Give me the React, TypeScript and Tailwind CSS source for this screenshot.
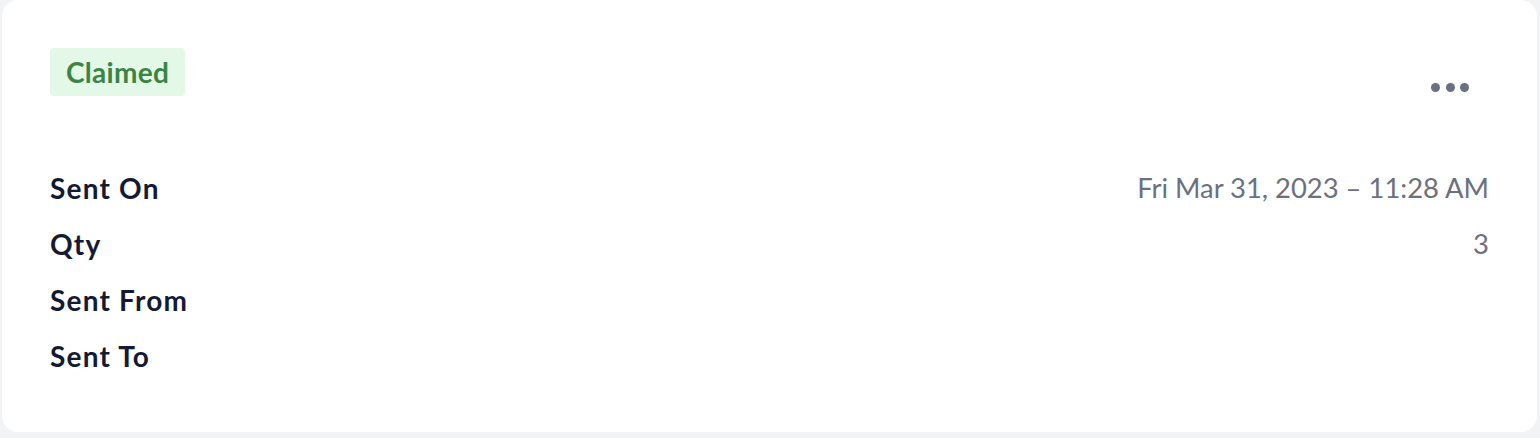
const rows = [
  { label: "Sent On", value: "Fri Mar 31, 2023 – 11:28 AM" },
  { label: "Qty", value: "3" },
  { label: "Sent From", value: "" },
  { label: "Sent To", value: "" },
];

export default function App() {
  return (
    <div className="h-[438px] bg-[#f2f3f5] pl-[2px] pr-[3px] pb-[6px] font-['Lato',sans-serif]">
      <div className="h-full rounded-2xl bg-white px-[48px] pt-[48px]">
        <div className="flex items-start justify-between">
          <span className="inline-flex h-[48px] items-center rounded bg-[#e3f8e7] px-4 text-[28px] font-bold tracking-[0.3px] text-[#3b8445]">
            Claimed
          </span>
          <button className="mt-[35px] mr-[20px] flex items-center gap-[5.5px] p-0">
            <span className="h-[9px] w-[9px] rounded-full bg-[#6b7080]" />
            <span className="h-[9px] w-[9px] rounded-full bg-[#6b7080]" />
            <span className="h-[9px] w-[9px] rounded-full bg-[#6b7080]" />
          </button>
        </div>
        <div className="mt-[76px] flex flex-col gap-[24px]">
          {rows.map((row) => (
            <div key={row.label} className="flex h-[32px] items-center justify-between leading-[32px]">
              <span className="text-[28px] font-bold tracking-[1.2px] text-[#141a33]">{row.label}</span>
              <span className="text-[27.4px] text-[#6b7080]">{row.value}</span>
            </div>
          ))}
        </div>
      </div>
    </div>
  );
}
